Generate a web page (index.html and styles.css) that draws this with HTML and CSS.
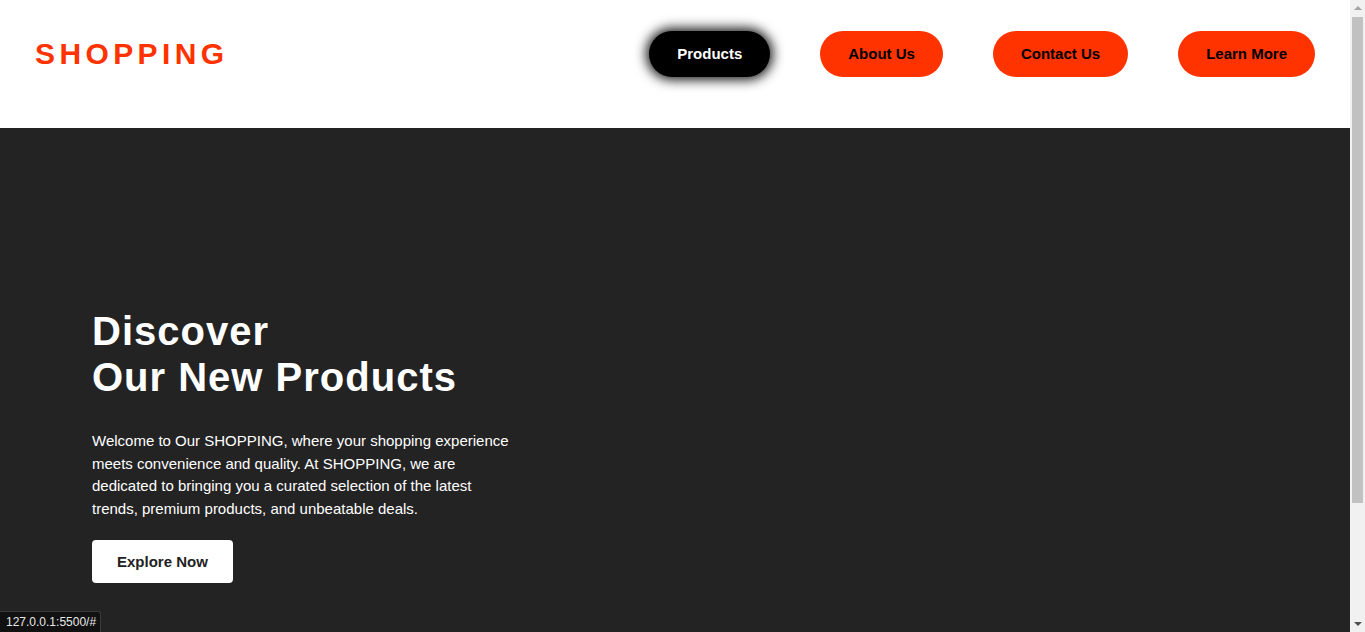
FILE: index.html
```html
<!DOCTYPE html>
<html lang="en">
<head>
<meta charset="utf-8">
<title>SHOPPING</title>
<link rel="stylesheet" href="styles.css">
</head>
<body>
<header class="site-header">
  <a class="logo" href="#">SHOPPING</a>
  <nav class="nav">
    <a class="nav-btn nav-btn--active" href="#">Products</a>
    <a class="nav-btn" href="#">About Us</a>
    <a class="nav-btn" href="#">Contact Us</a>
    <a class="nav-btn" href="#">Learn More</a>
  </nav>
</header>
<main class="hero">
  <div class="hero-content">
    <h1 class="hero-title">Discover<br>Our New Products</h1>
    <p class="hero-text">Welcome to Our SHOPPING, where your shopping experience meets convenience and quality. At SHOPPING, we are dedicated to bringing you a curated selection of the latest trends, premium products, and unbeatable deals.</p>
    <a class="hero-btn" href="#">Explore Now</a>
  </div>
</main>
<div class="status-tip">127.0.0.1:5500/#</div>
<div class="fake-scrollbar" aria-hidden="true">
  <span class="sb-arrow sb-arrow--up"></span>
  <span class="sb-thumb"></span>
  <span class="sb-arrow sb-arrow--down"></span>
</div>
</body>
</html>
```
FILE: styles.css
```css
* { box-sizing: border-box; }
html, body { margin: 0; padding: 0; }
body {
  font-family: "Liberation Sans", Arial, sans-serif;
  background: #232323;
  margin-right: 15px;
}
a { text-decoration: none; }

.site-header {
  background: #ffffff;
  height: 128px;
  display: flex;
  justify-content: space-between;
  align-items: flex-start;
  padding: 31px 35px 0 35px;
}
.logo {
  color: #ff3300;
  font-weight: 700;
  font-size: 30px;
  letter-spacing: 4.4px;
  line-height: 46px;
}
.nav {
  display: flex;
  gap: 50px;
}
.nav-btn {
  display: block;
  height: 46px;
  line-height: 46px;
  padding: 0 28px;
  border-radius: 23px;
  background: #ff3300;
  color: #000000;
  font-size: 15px;
  font-weight: 700;
}
.nav-btn--active {
  background: #000000;
  color: #ffffff;
  box-shadow: 0 0 12px 3px rgba(0, 0, 0, 0.9);
}

.hero {
  background: #232323;
  min-height: 650px;
  padding: 180px 92px 195px;
}
.hero-content {
  max-width: 420px;
}
.hero-title {
  margin: 0;
  color: #ffffff;
  font-size: 40px;
  line-height: 46px;
  letter-spacing: 1px;
  font-weight: 700;
  white-space: nowrap;
}
.hero-text {
  margin: 30px 0 20px;
  color: #ffffff;
  font-size: 15px;
  line-height: 22.5px;
}
.hero-btn {
  display: inline-block;
  background: #ffffff;
  color: #222222;
  font-size: 15px;
  font-weight: 700;
  height: 43px;
  line-height: 43px;
  padding: 0 25px;
  border-radius: 4px;
}

.status-tip {
  position: fixed;
  left: 0;
  bottom: 0;
  background: #111111;
  color: #e8e8e8;
  font-family: "Liberation Sans", Arial, sans-serif;
  font-size: 12px;
  line-height: 20px;
  padding: 0 4px 0 6px;
  border-top-right-radius: 3px;
  border: 1px solid #3a3a3a;
  border-left: none;
  border-bottom: none;
}

.fake-scrollbar {
  position: fixed;
  top: 0;
  right: 0;
  width: 15px;
  height: 100vh;
  background: #f1f1f1;
  display: flex;
  flex-direction: column;
  align-items: center;
}
.sb-arrow {
  width: 0;
  height: 0;
  border-left: 4px solid transparent;
  border-right: 4px solid transparent;
}
.sb-arrow--up {
  margin-top: 6px;
  border-bottom: 4px solid #a3a3a3;
}
.sb-arrow--down {
  margin-top: auto;
  margin-bottom: 6px;
  border-top: 4px solid #505050;
}
.sb-thumb {
  width: 11px;
  height: 486px;
  margin-top: 7px;
  background: #c1c1c1;
}
```
